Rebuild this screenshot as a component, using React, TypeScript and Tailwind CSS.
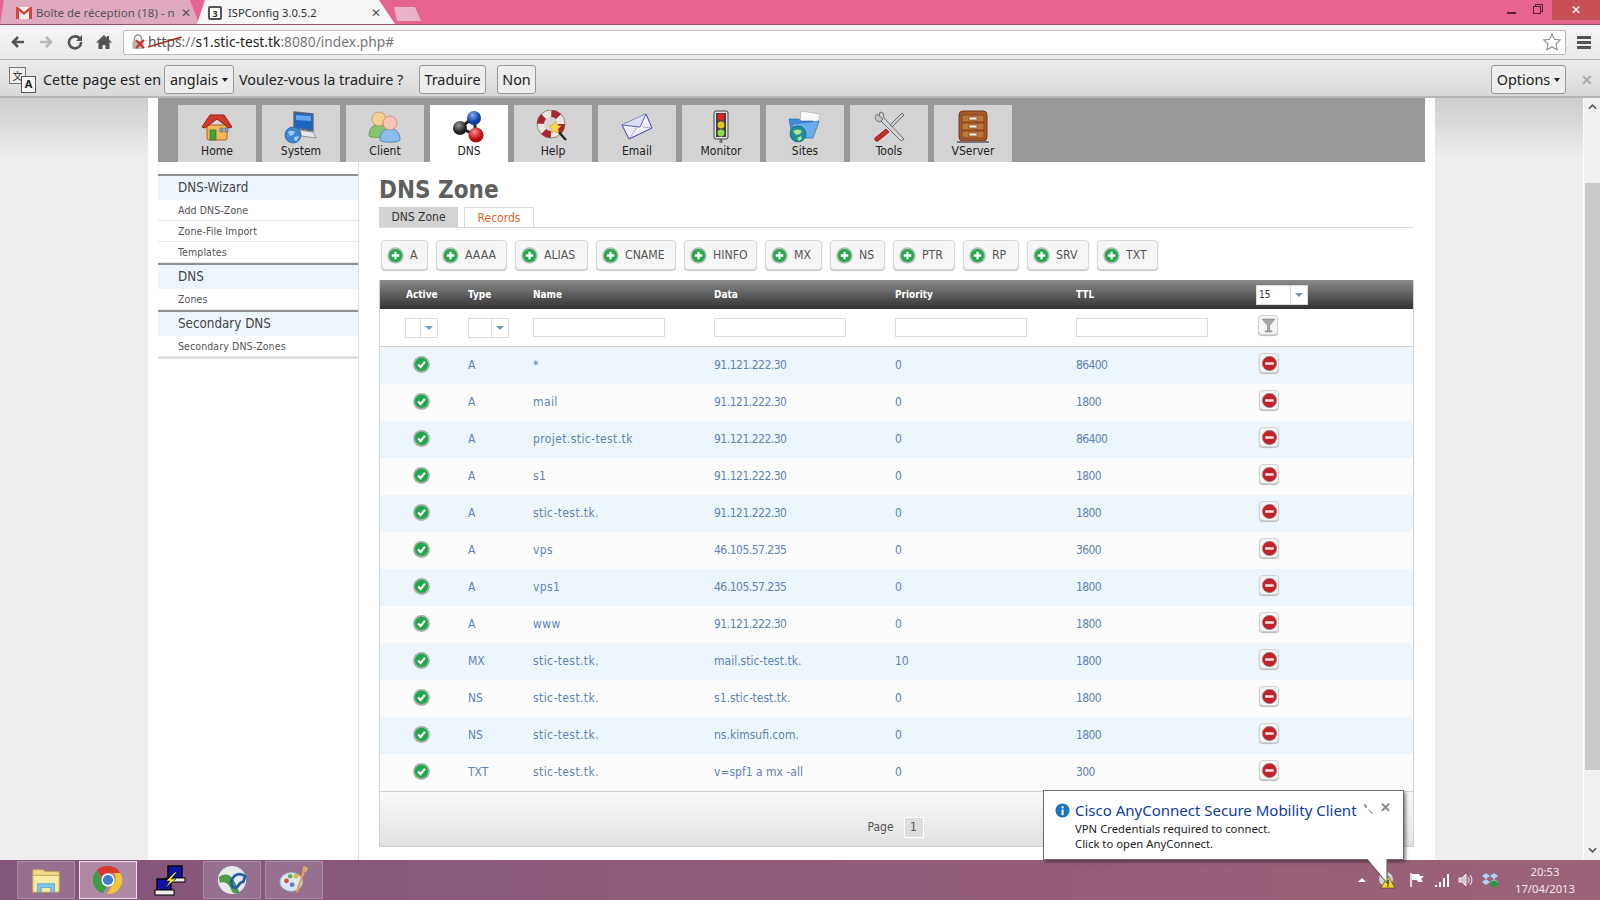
import { ReactNode } from "react";

const records = [
  ["A", "*", "91.121.222.30", "0", "86400"],
  ["A", "mail", "91.121.222.30", "0", "1800"],
  ["A", "projet.stic-test.tk", "91.121.222.30", "0", "86400"],
  ["A", "s1", "91.121.222.30", "0", "1800"],
  ["A", "stic-test.tk.", "91.121.222.30", "0", "1800"],
  ["A", "vps", "46.105.57.235", "0", "3600"],
  ["A", "vps1", "46.105.57.235", "0", "1800"],
  ["A", "www", "91.121.222.30", "0", "1800"],
  ["MX", "stic-test.tk.", "mail.stic-test.tk.", "10", "1800"],
  ["NS", "stic-test.tk.", "s1.stic-test.tk.", "0", "1800"],
  ["NS", "stic-test.tk.", "ns.kimsufi.com.", "0", "1800"],
  ["TXT", "stic-test.tk.", "v=spf1 a mx -all", "0", "300"],
];

const addButtons = [
  { label: "A", width: "w-[47px]" },
  { label: "AAAA", width: "w-[71px]" },
  { label: "ALIAS", width: "w-[73px]" },
  { label: "CNAME", width: "w-[80px]" },
  { label: "HINFO", width: "w-[73px]" },
  { label: "MX", width: "w-[57px]" },
  { label: "NS", width: "w-[55px]" },
  { label: "PTR", width: "w-[62px]" },
  { label: "RP", width: "w-[56px]" },
  { label: "SRV", width: "w-[62px]" },
  { label: "TXT", width: "w-[61px]" },
];

const rowGrid = "grid grid-cols-[88px_65px_181px_181px_181px_181px_1fr] items-center";

const HomeIcon = () => (
  <svg viewBox="0 0 34 34" className="h-[34px] w-[34px]">
    <path d="M7 15h20v13a2 2 0 0 1-2 2H9a2 2 0 0 1-2-2z" fill="#f6b658" stroke="#a8641c" />
    <path d="M2 17 10 5h14l8 12-3 1-12-9-12 9z" fill="#cf3b2a" stroke="#8d2018" />
    <rect x="10" y="20" width="6" height="10" fill="#3fa23a" stroke="#1f6a1f" strokeWidth=".6" />
    <rect x="20" y="18" width="3" height="4" fill="#7fa8d8" stroke="#35567f" strokeWidth=".5" />
    <rect x="25" y="18" width="3" height="4" fill="#7fa8d8" stroke="#35567f" strokeWidth=".5" />
  </svg>
);

const SystemIcon = () => (
  <svg viewBox="0 0 34 34" className="h-[34px] w-[34px]">
    <path d="M10 2 29 4v17L10 18z" fill="#1d63c0" stroke="#61676f" strokeWidth="1.4" />
    <path d="M12 5 27 6v5L12 10z" fill="#5fa6ee" />
    <path d="M15 20 29 22l3 6-15-2z" fill="#e4e6ea" stroke="#7d838b" strokeWidth=".8" />
    <circle cx="9" cy="25" r="8" fill="#3f86d2" stroke="#1e5597" strokeWidth=".7" />
    <path d="M4 22c3-2 5-1 7 0l-2 3-3 1zM10 27l5-1-2 5-3-1z" fill="#9fcdf3" />
  </svg>
);

const ClientIcon = () => (
  <svg viewBox="0 0 34 34" className="h-[34px] w-[34px]">
    <path d="M1 26c0-8 4-11 10-11s10 3 10 11c0 2-20 2-20 0z" fill="#86c56f" stroke="#4f8c40" strokeWidth=".7" />
    <circle cx="11" cy="9" r="7" fill="#f3cf92" stroke="#b58a4c" strokeWidth=".7" />
    <path d="M12 30c0-8 4-11 10-11s10 3 10 11c0 3-20 3-20 0z" fill="#8bbcec" stroke="#3f78b8" strokeWidth=".7" />
    <circle cx="22" cy="13" r="7" fill="#f6c3b6" stroke="#bb7d70" strokeWidth=".7" />
  </svg>
);

const DnsIcon = () => (
  <svg viewBox="0 0 34 34" className="h-[34px] w-[34px]">
    <defs>
      <radialGradient id="ballBlue" cx=".4" cy=".3"><stop offset="0" stopColor="#7fb4f5" /><stop offset="1" stopColor="#0d3e9c" /></radialGradient>
      <radialGradient id="ballRed" cx=".4" cy=".3"><stop offset="0" stopColor="#ff8d8d" /><stop offset="1" stopColor="#b80d12" /></radialGradient>
      <radialGradient id="ballGrey" cx=".4" cy=".3"><stop offset="0" stopColor="#9a9a9a" /><stop offset="1" stopColor="#222" /></radialGradient>
    </defs>
    <path d="M8 18 22 7l2 18z" fill="none" stroke="#222" strokeWidth="3" />
    <circle cx="22" cy="8" r="7" fill="url(#ballBlue)" />
    <circle cx="8" cy="18" r="7" fill="url(#ballGrey)" />
    <circle cx="24" cy="25" r="7.5" fill="url(#ballRed)" />
  </svg>
);

const HelpIcon = () => (
  <svg viewBox="0 0 34 34" className="h-[34px] w-[34px]">
    <circle cx="15" cy="14" r="10.5" fill="none" stroke="#efe6e2" strokeWidth="7" />
    <circle cx="15" cy="14" r="10.5" fill="none" stroke="#a9242c" strokeWidth="7" strokeDasharray="8 8.5" />
    <circle cx="15" cy="14" r="14" fill="none" stroke="#7a5a5a" strokeWidth=".7" />
    <path d="m20 19 10 11" stroke="#222" strokeWidth="2.4" />
    <path d="m19 11 2 4 4 1-3 3 1 4-4-2-4 2 1-4-3-3 4-1z" fill="#f9d648" stroke="#c99420" strokeWidth=".5" />
  </svg>
);

const EmailIcon = () => (
  <svg viewBox="0 0 34 34" className="h-[34px] w-[34px]">
    <path d="M2 15 26 4l6 14L9 29z" fill="#eef0fc" stroke="#3d3f9a" strokeWidth="1" />
    <path d="M2 15 20 17 26 4" fill="#dcdff7" stroke="#3d3f9a" strokeWidth=".8" />
    <path d="M9 29 17 17m6 0 9 1" fill="none" stroke="#8a8dcc" strokeWidth=".7" />
  </svg>
);

const MonitorIcon = () => (
  <svg viewBox="0 0 34 34" className="h-[34px] w-[34px]">
    <rect x="15.5" y="28" width="3" height="5" fill="#777" />
    <rect x="10" y="1" width="14" height="28" rx="2" fill="#ddd" stroke="#444" />
    <rect x="12" y="3" width="10" height="24" fill="#444" />
    <circle cx="17" cy="7" r="3.4" fill="#e8201c" />
    <circle cx="17" cy="15" r="3.4" fill="#e8c21c" />
    <circle cx="17" cy="23" r="3.4" fill="#8ae04a" />
  </svg>
);

const SitesIcon = () => (
  <svg viewBox="0 0 34 34" className="h-[34px] w-[34px]">
    <path d="M13 1 32 4l-3 15-17-3z" fill="#f8f8f8" stroke="#a3a9b2" strokeWidth=".6" />
    <path d="M1 9h10l2 2h12l-2 16H4z" fill="#3f8ede" stroke="#2a609f" strokeWidth=".6" />
    <path d="M4 14 31 11l-6 17H6z" fill="#6aaef0" stroke="#2a609f" strokeWidth=".6" />
    <circle cx="10" cy="24" r="8" fill="#1f8f9e" stroke="#115a6b" strokeWidth=".7" />
    <path d="M5 21c3-2 6-2 9 0l-2 3-4 1zM9 28l4-2 1 3-3 2z" fill="#b5e28a" />
  </svg>
);

const ToolsIcon = () => (
  <svg viewBox="0 0 34 34" className="h-[34px] w-[34px]">
    <path d="m8 2-1 5 2 4 20 20 3-2L12 8l-1-5z" fill="#d0d4d8" stroke="#565a60" strokeWidth=".8" />
    <path d="M5 4c-3 3-2 7 3 8l3-3z" fill="#c2c6cc" stroke="#565a60" strokeWidth=".8" />
    <path d="m30 3 2 2-12 12-2-2z" fill="#c8ccd0" stroke="#565a60" strokeWidth=".8" />
    <path d="M14 19 3 28c-1 2 1 4 3 3l11-9z" fill="#c72b26" stroke="#7a1815" strokeWidth=".8" />
  </svg>
);

const VServerIcon = () => (
  <svg viewBox="0 0 34 34" className="h-[34px] w-[34px]">
    <rect x="3" y="1" width="28" height="30" rx="4" fill="#a85a2a" stroke="#74391a" />
    <rect x="6" y="5" width="22" height="7" fill="#bf7438" stroke="#6f3a1b" strokeWidth=".7" />
    <rect x="6" y="13" width="22" height="7" fill="#bf7438" stroke="#6f3a1b" strokeWidth=".7" />
    <rect x="6" y="21" width="22" height="7" fill="#bf7438" stroke="#6f3a1b" strokeWidth=".7" />
    <rect x="13" y="7" width="8" height="3" fill="#efe3cf" stroke="#5b3014" strokeWidth=".5" />
    <rect x="13" y="15" width="8" height="3" fill="#efe3cf" stroke="#5b3014" strokeWidth=".5" />
    <rect x="13" y="23" width="8" height="3" fill="#efe3cf" stroke="#5b3014" strokeWidth=".5" />
    <rect x="1" y="31" width="32" height="2" fill="#777" />
  </svg>
);

const navItems = [
  { label: "Home", icon: <HomeIcon /> },
  { label: "System", icon: <SystemIcon /> },
  { label: "Client", icon: <ClientIcon /> },
  { label: "DNS", icon: <DnsIcon />, active: true },
  { label: "Help", icon: <HelpIcon /> },
  { label: "Email", icon: <EmailIcon /> },
  { label: "Monitor", icon: <MonitorIcon /> },
  { label: "Sites", icon: <SitesIcon /> },
  { label: "Tools", icon: <ToolsIcon /> },
  { label: "VServer", icon: <VServerIcon /> },
];

const PlusIcon = () => (
  <svg viewBox="0 0 16 16" className="h-[17px] w-[17px] shrink-0">
    <circle cx="8" cy="8" r="7.8" fill="#b4bdb6" />
    <circle cx="8" cy="8" r="6.2" fill="#23a84a" />
    <path d="M8 4.5v7M4.5 8h7" stroke="#fff" strokeWidth="2.2" />
  </svg>
);

const CheckIcon = () => (
  <svg viewBox="0 0 16 16" className="h-[17px] w-[17px]">
    <circle cx="8" cy="8" r="7.9" fill="#a4b0a7" />
    <circle cx="8" cy="7.8" r="6.2" fill="#1fa84a" />
    <path d="m4.8 8 2.3 2.4 4.2-5" fill="none" stroke="#fff" strokeWidth="2" />
  </svg>
);

const DeleteButton = () => (
  <div className="flex h-[20px] w-[20px] items-center justify-center rounded-[4px] border border-[#d2d2d2] bg-[#f4f4f4] shadow-[0_1px_1px_#bbb]">
    <svg viewBox="0 0 14 14" className="h-[15px] w-[15px]">
      <circle cx="7" cy="7" r="6.7" fill="#c3202a" stroke="#8f8f8f" strokeWidth=".6" />
      <rect x="3" y="5.8" width="8" height="2.4" fill="#f3dede" />
    </svg>
  </div>
);

const FilterButton = () => (
  <div className="flex h-[20px] w-[20px] items-center justify-center rounded-[4px] border border-[#d2d2d2] bg-[#f4f4f4] shadow-[0_1px_1px_#bbb]">
    <svg viewBox="0 0 14 14" className="h-[15px] w-[15px]">
      <path d="M1 1h12L8 7v5h2v1H4v-1h2V7z" fill="#a8a8a8" stroke="#777" strokeWidth=".5" />
    </svg>
  </div>
);

const SelectBox = ({ value = "", className }: { value?: string; className: string }) => (
  <div className={`flex h-[20px] items-center border border-[#dcdcdc] bg-white text-[10px] text-[#333] ${className}`}>
    <span className="flex-1 pl-[2px]">{value}</span>
    <span className="flex h-full w-[17px] items-center justify-center border-l border-[#dcdcdc]">
      <span className="h-0 w-0 border-x-[4px] border-t-[4px] border-x-transparent border-t-[#6d9dc8]" />
    </span>
  </div>
);

const Caret = () => (
  <span className="ml-[4px] inline-block h-0 w-0 border-x-[3.5px] border-t-[4px] border-x-transparent border-t-[#222] align-middle" />
);

const InfoButton = ({ children, className = "" }: { children: ReactNode; className?: string }) => (
  <div className={`flex h-[29px] items-center justify-center rounded-[3px] border border-[#9a9a9a] bg-[#eeeeee] text-[#222] ${className}`}>
    {children}
  </div>
);

const SideTitle = ({ children }: { children: ReactNode }) => (
  <div className="flex h-[26px] items-center border-t-[2px] border-[#8f8f8f] bg-[#eef6fd] pl-[20px] text-[13.3px] text-[#444]">
    {children}
  </div>
);

const SideItem = ({ children }: { children: ReactNode }) => (
  <div className="flex h-[21px] items-center border-b border-[#e8e8e8] pl-[20px] pt-[1px] text-[10.5px] tracking-[0.1px] text-[#555]">
    {children}
  </div>
);

const ChromeLogo = () => (
  <svg viewBox="0 0 32 32" className="h-[30px] w-[30px]">
    <path d="M16 1a15 15 0 0 1 13 7.5H16a7.5 7.5 0 0 0-7 4.6L4 5.7A15 15 0 0 1 16 1z" fill="#d9382e" />
    <path d="M4 5.7l5.6 9.7a7.5 7.5 0 0 0 5 7.5L10.500 30.500A15 15 0 0 1 4 5.700z" fill="#3f9e44" />
    <path d="M29 8.500A15 15 0 0 1 15 31l6.500-11a7.500 7.500 0 0 0 .500-11.500z" fill="#f2c82e" />
    <circle cx="16" cy="16" r="7" fill="#fff" />
    <circle cx="16" cy="16" r="5.400" fill="#3f7fd0" />
  </svg>
);

const TaskButton = ({ children, active, plain }: { children: ReactNode; active?: boolean; plain?: boolean }) => (
  <div
    className={`flex h-[38px] w-[58px] items-center justify-center ${
      plain ? "" : active ? "border border-[#eadfe6] bg-[#b08aa4]" : "border border-[#ab8aa5] bg-[#96708f]"
    }`}
  >
    {children}
  </div>
);

const App = () => {
  return (
    <div className="relative flex h-[900px] w-[1600px] flex-col overflow-hidden font-['Noto_Sans',sans-serif]">
      {/* tab strip */}
      <div className="flex h-[25px] items-end justify-between border-b border-[#a84a70] bg-[#e7648f]">
        <div className="flex items-end text-[11.5px]">
          <div className="flex h-[24px] w-[199px] items-center bg-[#dfa9c0] pl-[16px] pr-[8px] pt-[2px] text-[#555] [clip-path:polygon(4px_0,190px_0,199px_100%,0_100%)]">
            <svg viewBox="0 0 16 12" className="h-[12px] w-[16px] shrink-0">
              <rect width="16" height="12" fill="#f4eeee" />
              <path d="M0 0v12h3V4l5 4 5-4v8h3V0h-2L8 5 2 0z" fill="#d8443a" />
            </svg>
            <span className="ml-[4px] flex-1 whitespace-nowrap">Boîte de réception (18) - n</span>
            <span className="ml-[2px] text-[#555]">✕</span>
          </div>
          <div className="-ml-[2px] flex h-[24px] w-[198px] items-center bg-[#f6f6f6] pl-[11px] pr-[14px] pt-[2px] text-[#333] [clip-path:polygon(8px_0,182px_0,198px_100%,0_100%)]">
            <span className="flex h-[14px] w-[14px] items-center justify-center rounded-[2px] border-2 border-[#555] bg-white text-[9px] font-bold leading-none text-[#333]">3</span>
            <span className="ml-[6px] flex-1 text-[11.2px]">ISPConfig 3.0.5.2</span>
            <span className="text-[#555]">✕</span>
          </div>
          <div className="-ml-[4px] mb-[3px] h-[14px] w-[30px] bg-[#e8b3c8] [clip-path:polygon(3px_0,24px_0,30px_100%,6px_100%)]" />
        </div>
        <div className="flex h-full items-start">
          <div className="flex h-[15px] w-[26px] items-end justify-center pb-[1px]">
            <span className="h-[2px] w-[9px] bg-[#5a1f3c]" />
          </div>
          <div className="relative h-[18px] w-[28px]">
            <span className="absolute left-[11px] top-[4px] h-[8px] w-[8px] border border-[#5a1f3c]" />
            <span className="absolute left-[9px] top-[6px] h-[8px] w-[8px] border border-[#5a1f3c] bg-[#e7648f]" />
          </div>
          <div className="flex h-[20px] w-[48px] items-center justify-center bg-[#c75057] text-[12px] text-white">✕</div>
        </div>
      </div>

      {/* toolbar */}
      <div className="flex h-[35px] items-center border-b border-[#b5b5b5] bg-gradient-to-b from-[#f6f6f6] to-[#e9e9e9]">
        <div className="flex w-[123px] items-center pl-[10px] text-[#555]">
          <svg viewBox="0 0 16 16" className="h-[16px] w-[16px]"><path d="M14 8H3m5-5L3 8l5 5" fill="none" stroke="#555" strokeWidth="2.600" /></svg>
          <svg viewBox="0 0 16 16" className="ml-[12px] h-[16px] w-[16px]"><path d="M2 8h11M8 3l5 5-5 5" fill="none" stroke="#b9b9b9" strokeWidth="2.600" /></svg>
          <svg viewBox="0 0 16 16" className="ml-[13px] h-[16px] w-[16px]"><path d="M13 5a6 6 0 1 0 1 3" fill="none" stroke="#555" strokeWidth="2.600" /><path d="M15 1v6H9z" fill="#555" /></svg>
          <svg viewBox="0 0 16 16" className="ml-[13px] h-[16px] w-[16px]"><path d="M8 1 0 8.500h2.500V15h4v-4h3v4h4V8.500H16l-3-2.800V2h-2v1.800z" fill="#555" /></svg>
        </div>
        <div className="flex h-[25px] w-[1443px] items-center rounded-[2px] border border-[#b9b9b9] bg-white text-[13.8px] text-[#777]">
          <svg viewBox="0 0 16 16" className="ml-[6px] h-[16px] w-[16px]">
            <path d="M4.500 7V4.500a3.500 3.500 0 0 1 7 0V7" fill="none" stroke="#999" strokeWidth="1.500" />
            <rect x="2.500" y="7" width="11" height="8" rx="1" fill="#b5b5b5" />
            <path d="m6 6 8 8m0-8-8 8" stroke="#d0281e" strokeWidth="2" />
          </svg>
          <span className="relative ml-[2px] text-[#555]">
            https
            <svg viewBox="0 0 34 14" preserveAspectRatio="none" className="absolute left-0 top-[3px] h-[14px] w-full">
              <path d="M0 12 34 2" stroke="#a52a20" strokeWidth="1.500" />
            </svg>
          </span>
          <span>://</span>
          <span className="text-[#222]">s1.stic-test.tk</span>
          <span>:8080/index.php#</span>
          <svg viewBox="0 0 20 20" className="ml-auto mr-[3px] h-[20px] w-[20px]"><path d="m10 2 2.500 5.300 5.700.7-4.200 4 1.100 5.800L10 15l-5.100 2.800L6 12 1.800 8l5.700-.7z" fill="none" stroke="#8f8f8f" strokeWidth="1.100" /></svg>
        </div>
        <div className="ml-[11px] flex w-[14px] flex-col gap-[2px]">
          <span className="h-[3px] bg-[#555]" />
          <span className="h-[3px] bg-[#555]" />
          <span className="h-[3px] bg-[#555]" />
        </div>
      </div>

      {/* translate bar */}
      <div className="flex h-[38px] items-center border-b-[2px] border-[#b5b5b5] bg-gradient-to-b from-[#ececec] to-[#d9d9d9] pt-[3px] text-[14.4px] text-[#222]">
        <div className="relative ml-[9px] h-[26px] w-[27px]">
          <span className="absolute left-0 top-0 flex h-[17px] w-[17px] items-center justify-center border border-[#777] bg-[#eee] text-[10px] font-['Noto_Sans_CJK_SC',sans-serif]">文</span>
          <span className="absolute bottom-0 right-0 flex h-[17px] w-[15px] items-center justify-center border border-[#555] bg-[#f6f6f6] text-[11px] font-bold">A</span>
        </div>
        <span className="ml-[7px] w-[121px] whitespace-nowrap">Cette page est en</span>
        <InfoButton className="w-[70px]">anglais<Caret /></InfoButton>
        <span className="ml-[5px] w-[180px] whitespace-nowrap">Voulez-vous la traduire ?</span>
        <InfoButton className="w-[67px]">Traduire</InfoButton>
        <InfoButton className="ml-[11px] w-[39px]">Non</InfoButton>
        <InfoButton className="ml-auto w-[75px]">Options<Caret /></InfoButton>
        <span className="ml-[14px] mr-[6px] w-[14px] text-center text-[14px] font-bold text-[#aaa]">✕</span>
      </div>

      {/* page */}
      <div className="flex min-h-0 flex-1 font-['DejaVu_Sans_Condensed','DejaVu_Sans',sans-serif]">
        <div className="w-[148px] bg-gradient-to-b from-[#cdcdcd] to-[#eeeeee] bg-[length:100%_62px] bg-no-repeat [background-color:#eeeeee]" />
        <div className="flex w-[1287px] flex-col bg-white px-[10px]">
          <div className="flex h-[64px] shrink-0 items-end gap-[6px] bg-[#999999] pl-[20px]">
            {navItems.map((item) => (
              <div
                key={item.label}
                className={`flex h-[57px] w-[78px] flex-col items-center pt-[5px] text-[12px] leading-[16px] text-[#222] ${
                  item.active ? "bg-white" : "bg-[#d3d3d3]"
                }`}
              >
                {item.icon}
                <span className="-mt-[1px]">{item.label}</span>
              </div>
            ))}
          </div>

          <div className="flex min-h-0 flex-1">
            <div className="w-[201px] shrink-0 border-r border-[#dcdcdc] pt-[12px]">
              <SideTitle>DNS-Wizard</SideTitle>
              <SideItem>Add DNS-Zone</SideItem>
              <SideItem>Zone-File Import</SideItem>
              <SideItem>Templates</SideItem>
              <SideTitle>DNS</SideTitle>
              <SideItem>Zones</SideItem>
              <SideTitle>Secondary DNS</SideTitle>
              <SideItem>Secondary DNS-Zones</SideItem>
              <div className="h-[2px] bg-[#e0e0e0]" />
            </div>

            <div className="min-w-0 flex-1 pl-[20px] pr-[11px] pt-[13px]">
              <h1 className="h-[30px] text-[24px] font-bold leading-[30px] text-[#5f5f5f]">DNS Zone</h1>
              <div className="mt-[3px] flex h-[20px] items-end gap-[6px] border-b border-[#dcdcdc] text-[12px]">
                <div className="flex h-[20px] w-[79px] items-center justify-center bg-[#d3d3d3] text-[#333]">DNS Zone</div>
                <div className="flex h-[20px] w-[70px] items-center justify-center border border-b-0 border-[#dcdcdc] text-[#e5622a]">Records</div>
              </div>

              <div className="ml-[2px] mt-[12px] flex h-[30px] gap-[8px]">
                {addButtons.map((b) => (
                  <div
                    key={b.label}
                    className={`flex items-center gap-[6px] rounded-[4px] border border-[#d8d8d8] bg-[#f6f6f6] pl-[5px] text-[12.2px] text-[#555] shadow-[0_1px_1px_#c4c4c4] ${b.width}`}
                  >
                    <PlusIcon />
                    {b.label}
                  </div>
                ))}
              </div>

              <div className="mt-[10px] border-x border-[#d2d2d2]">
                <div className={`${rowGrid} h-[29px] bg-gradient-to-b from-[#8c8c8c] to-[#333333] text-[10px] font-bold text-white`}>
                  <span className="pl-[26px]">Active</span>
                  <span>Type</span>
                  <span>Name</span>
                  <span>Data</span>
                  <span>Priority</span>
                  <span>TTL</span>
                  <div className="-ml-[1px]">
                    <SelectBox value="15" className="w-[52px] font-normal" />
                  </div>
                </div>
                <div className={`${rowGrid} h-[38px] border-b border-[#d2d2d2]`}>
                  <div className="pl-[25px]"><SelectBox className="w-[33px]" /></div>
                  <div><SelectBox className="w-[41px]" /></div>
                  <div className="h-[19px] w-[132px] border border-[#dcdcdc]" />
                  <div className="h-[19px] w-[132px] border border-[#dcdcdc]" />
                  <div className="h-[19px] w-[132px] border border-[#dcdcdc]" />
                  <div className="h-[19px] w-[132px] border border-[#dcdcdc]" />
                  <div className="mb-[5px] pl-[1px]"><FilterButton /></div>
                </div>
                {records.map((r, i) => (
                  <div
                    key={i}
                    className={`${rowGrid} h-[37px] pb-[2px] text-[12px] text-[#5f83b5] ${i % 2 === 0 ? "bg-[#edf6fd]" : "bg-[#fcfcfc]"}`}
                  >
                    <div className="pl-[33px]"><CheckIcon /></div>
                    <span>{r[0]}</span>
                    <span className="tracking-[0.4px]">{r[1]}</span>
                    <span className={/^[\d.]+$/.test(r[2]) ? "tracking-[-0.5px]" : ""}>{r[2]}</span>
                    <span>{r[3]}</span>
                    <span className="tracking-[-0.6px]">{r[4]}</span>
                    <div className="mb-[3px] pl-[2px]"><DeleteButton /></div>
                  </div>
                ))}
              </div>

              <div className="flex h-[56px] items-center justify-center gap-[10px] border border-[#d2d2d2] bg-gradient-to-b from-[#fafafa] to-[#e2e2e2] pr-[2px] pt-[16px] text-[12px] text-[#555]">
                <span>Page</span>
                <span className="flex h-[21px] w-[20px] items-center justify-center border border-white bg-[#dedede]">1</span>
              </div>
            </div>
          </div>
        </div>
        <div className="flex-1 bg-gradient-to-b from-[#cdcdcd] to-[#eeeeee] bg-[length:100%_62px] bg-no-repeat [background-color:#eeeeee]" />
        <div className="flex w-[17px] flex-col items-center border-l border-[#fafafa] bg-[#f0f0f0]">
          <svg viewBox="0 0 10 6" className="mt-[6px] h-[6px] w-[9px]"><path d="M1 5 5 1l4 4" fill="none" stroke="#555" strokeWidth="1.800" /></svg>
          <div className="mt-[73px] h-[587px] w-[15px] bg-[#c9c9c9]" />
          <svg viewBox="0 0 10 6" className="mt-auto mb-[7px] h-[6px] w-[9px]"><path d="M1 1l4 4 4-4" fill="none" stroke="#555" strokeWidth="1.800" /></svg>
        </div>
      </div>

      {/* taskbar */}
      <div className="flex h-[40px] items-center bg-gradient-to-r from-[#84557a] to-[#9c6278] pl-[17px] font-['Noto_Sans',sans-serif]">
        <div className="flex gap-[4px]">
          <TaskButton>
            <svg viewBox="0 0 32 32" className="h-[30px] w-[32px]">
              <path d="M2 5h11l2 2h15v20H2z" fill="#f2d98a" stroke="#c5a24d" />
              <path d="M2 11h28v18H2z" fill="#fbeaa8" stroke="#c5a24d" />
              <path d="M7 20h18v9h-4v-5H11v5H7z" fill="#7ec8ee" stroke="#4a93c3" strokeWidth=".7" />
            </svg>
          </TaskButton>
          <TaskButton active><ChromeLogo /></TaskButton>
          <TaskButton plain>
            <svg viewBox="0 0 32 32" className="h-[32px] w-[32px]">
              <rect x="14" y="2" width="14" height="12" fill="#1111aa" stroke="#000" strokeWidth="1.400" />
              <rect x="12" y="14" width="19" height="4" fill="#eee" stroke="#000" />
              <rect x="3" y="15" width="14" height="11" fill="#1111aa" stroke="#000" strokeWidth="1.400" />
              <rect x="1" y="26" width="19" height="5" fill="#eee" stroke="#000" />
              <path d="m21 8-9 9h4l-5 7 11-9h-5l6-7z" fill="#f8f23a" stroke="#000" strokeWidth=".5" />
            </svg>
          </TaskButton>
          <TaskButton>
            <svg viewBox="0 0 32 32" className="h-[30px] w-[30px]">
              <circle cx="16" cy="16" r="15" fill="#e8eaea" />
              <path d="M2 13C8 8 14 10 18 16l6 13c-6 3-8 0-9-3C13 20 8 17 3 19z" fill="#3f8f3a" fillOpacity=".9" />
              <path d="M30 12c-6-5-12-1-14 3-2 5 0 10 4 9 4-1 3-6 8-6z" fill="none" stroke="#1e5fa8" strokeWidth="3" />
            </svg>
          </TaskButton>
          <TaskButton>
            <svg viewBox="0 0 32 32" className="h-[30px] w-[32px]">
              <ellipse cx="13" cy="18" rx="12" ry="10" fill="#dbe9f5" stroke="#9fb4c8" />
              <circle cx="8" cy="17" r="2.500" fill="#d8513a" />
              <circle cx="12" cy="12" r="2.500" fill="#6db04a" />
              <circle cx="18" cy="12" r="2.500" fill="#e8b33a" />
              <circle cx="14" cy="21" r="2.500" fill="#6d76c8" />
              <path d="m28 2-9 27" stroke="#e6a14a" strokeWidth="2.400" />
              <path d="m26 1 5 2-2 5-4-2z" fill="#d9a56a" />
            </svg>
          </TaskButton>
        </div>

        <div className="ml-auto flex items-center text-white">
          <span className="mr-[12px] h-0 w-0 border-x-[4px] border-b-[4px] border-x-transparent border-b-white" />
          <svg viewBox="0 0 18 18" className="mr-[13px] h-[18px] w-[18px]">
            <circle cx="8" cy="8" r="7" fill="#c9d2cc" />
            <path d="M10 5 17 17H3z" fill="#f4d52c" stroke="#333" strokeWidth=".6" />
            <rect x="9.300" y="9" width="1.400" height="4.500" fill="#222" />
            <rect x="9.300" y="14.200" width="1.400" height="1.400" fill="#222" />
          </svg>
          <svg viewBox="0 0 16 16" className="mr-[9px] h-[16px] w-[16px]">
            <path d="M2 1v14" stroke="#fff" strokeWidth="1.500" />
            <path d="M3 2h7l1 2h4l-3 3 2 3h-5l-1-2H3z" fill="#fff" />
          </svg>
          <svg viewBox="0 0 16 16" className="mr-[8px] h-[16px] w-[16px]">
            <path d="M1 13h2v2H1zM5 10h2v5H5zM9 6h2v9H9zM13 2h2v13h-2z" fill="#fff" />
          </svg>
          <svg viewBox="0 0 16 16" className="mr-[8px] h-[16px] w-[16px]">
            <path d="M1 6h3l4-4v12l-4-4H1z" fill="#cfc2cb" stroke="#fff" strokeWidth=".8" />
            <path d="M10 5c1.500 2 1.500 4 0 6m2-8c2.500 3 2.500 7 0 10" fill="none" stroke="#fff" />
          </svg>
          <svg viewBox="0 0 16 16" className="h-[16px] w-[16px]">
            <path d="m4 1 4 3-4 3-4-3zM12 1l4 3-4 3-4-3zM4 7l4 3-4 3-4-3zM12 7l4 3-4 3-4-3z" fill="#a9d6f5" />
            <circle cx="12" cy="12" r="3.500" fill="#2a9a3c" />
          </svg>
          <div className="ml-[6px] w-[84px] pr-[2px] text-center text-[11.3px] leading-[17px] text-[#f2e8ee]">
            <div>20:53</div>
            <div>17/04/2013</div>
          </div>
          <div className="w-[12px]" />
        </div>
      </div>

      {/* vpn balloon */}
      <div className="absolute left-[1043px] top-[790px] h-[70px] w-[361px] border border-[#6d6d6d] bg-white font-['Noto_Sans',sans-serif] shadow-[2px_2px_3px_rgba(0,0,0,0.45)]">
        <svg viewBox="0 0 16 16" className="absolute left-[11px] top-[12px] h-[15px] w-[15px]">
          <circle cx="8" cy="8" r="7.500" fill="#1a73c4" />
          <rect x="7" y="7" width="2.200" height="6" fill="#fff" />
          <rect x="7" y="3.500" width="2.200" height="2.200" fill="#fff" />
        </svg>
        <div className="absolute left-[31px] top-[8px] whitespace-nowrap text-[15px] leading-[22px] text-[#0f3d9e]">Cisco AnyConnect Secure Mobility Client</div>
        <svg viewBox="0 0 12 12" className="absolute left-[318px] top-[12px] h-[12px] w-[12px]">
          <path d="M2 1a3 3 0 0 0 3 4l5 6 1-1-6-5a3 3 0 0 0-3-4z" fill="#999" />
        </svg>
        <span className="absolute left-[336px] top-[7px] text-[13px] font-bold leading-[18px] text-[#888]">✕</span>
        <div className="absolute left-[31px] top-[30px] text-[11.3px] leading-[15px] text-[#222]">
          <div>VPN Credentials required to connect.</div>
          <div>Click to open AnyConnect.</div>
        </div>
      </div>
      <svg viewBox="0 0 22 26" className="absolute left-[1367px] top-[859px] h-[26px] w-[22px]">
        <path d="M0 0 20 24V0z" fill="#fff" />
        <path d="M0 0 20 24V0" fill="none" stroke="#555" />
      </svg>
    </div>
  );
};

export default App;
